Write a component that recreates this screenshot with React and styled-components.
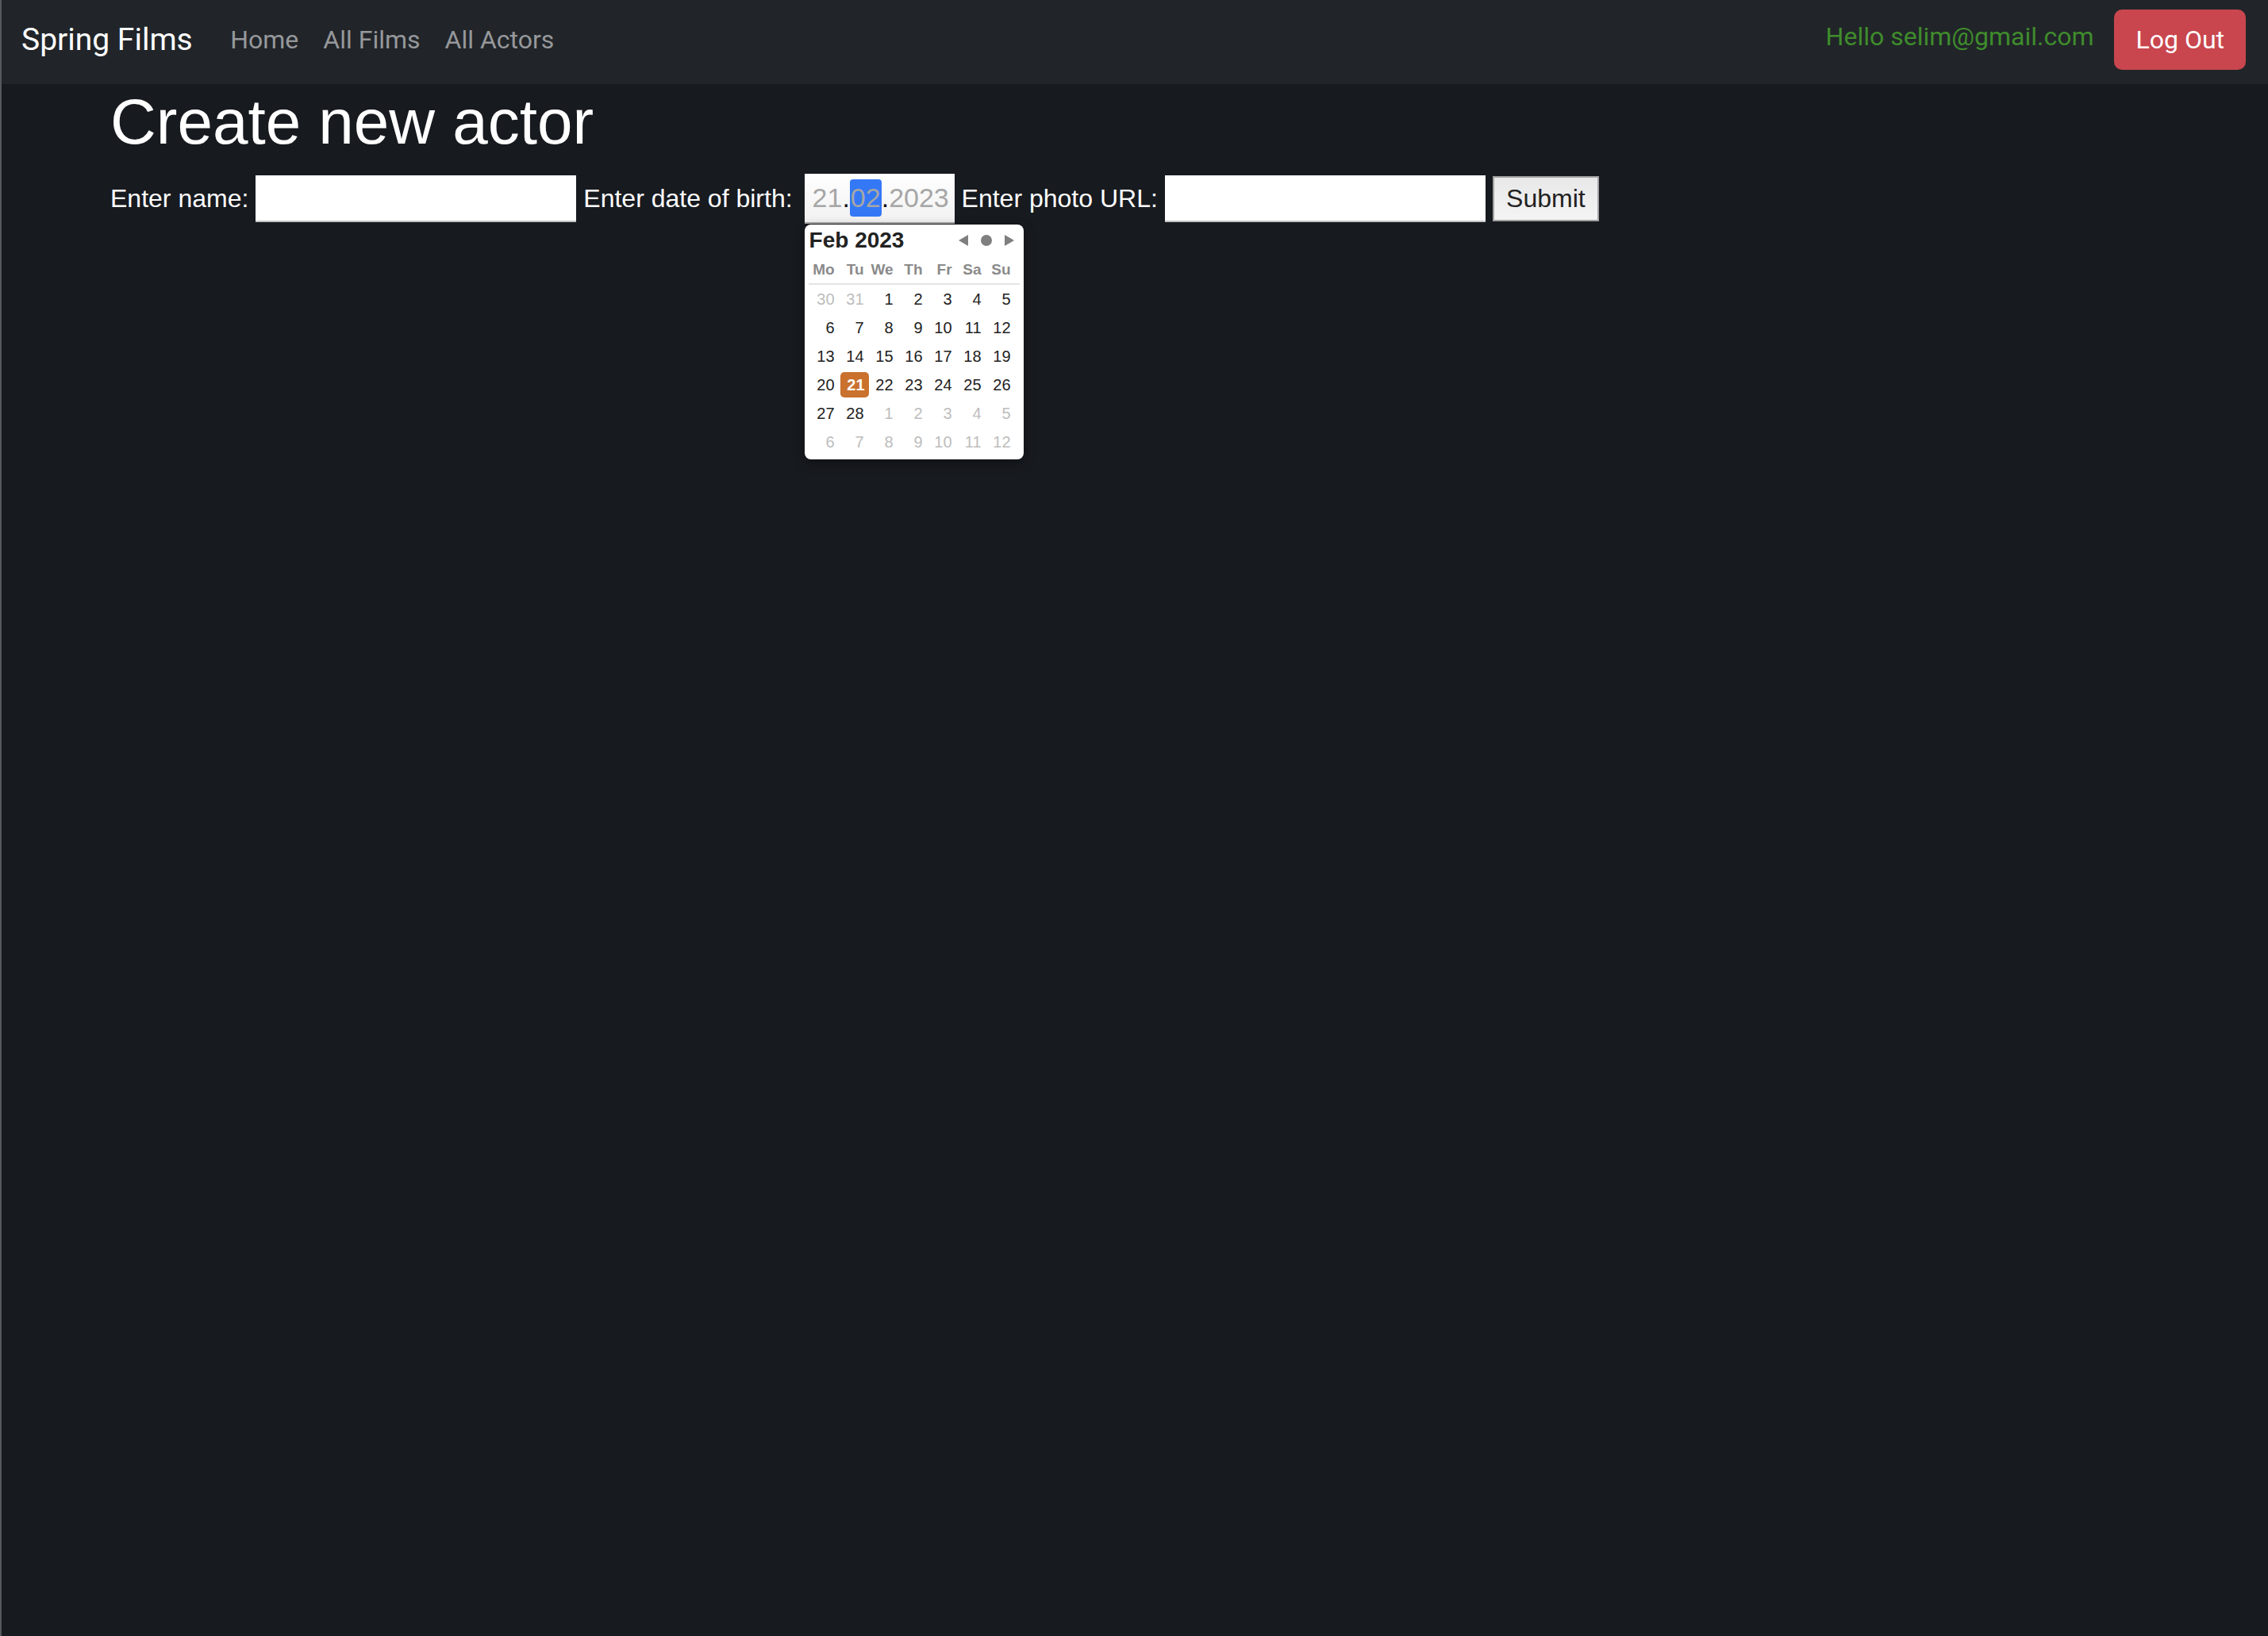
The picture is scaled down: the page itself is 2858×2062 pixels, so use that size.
import React from 'react'
import styled, { createGlobalStyle } from 'styled-components'

const GlobalStyle = createGlobalStyle`
  html, body {
    margin: 0;
    padding: 0;
    background: #171a1f;
  }
  * {
    box-sizing: border-box;
  }
`

const Page = styled.div`
  min-height: 100vh;
  background: #171a1f;
  border-left: 2px solid #55585d;
  font-family: "Liberation Sans", Arial, sans-serif;
`

const Navbar = styled.nav`
  height: 106px;
  background: #212529;
  display: flex;
  align-items: center;
  padding: 0 28px 6px 25px;
  font-family: Roboto, "Noto Sans", sans-serif;
`

const Brand = styled.a`
  font-size: 39px;
  color: #fff;
  margin-right: 32px;
  text-decoration: none;
`

const NavList = styled.div`
  display: flex;
`

const NavLink = styled.a`
  font-size: 32px;
  color: #96989b;
  padding: 0 15.5px;
  text-decoration: none;
`

const UserArea = styled.div`
  margin-left: auto;
  display: flex;
  align-items: center;
  gap: 26px;
`

const Hello = styled.span`
  font-size: 32px;
  color: #3f8c2c;
  margin-top: -8px;
`

const LogoutButton = styled.button`
  height: 76px;
  padding: 0 27px;
  border: none;
  border-radius: 10px;
  background: #c9464e;
  color: #fff;
  font-family: Roboto, "Noto Sans", sans-serif;
  font-size: 32px;
`

const Main = styled.main`
  padding-left: 137px;
`

const Title = styled.h1`
  margin: 0 0 17px;
  font-size: 80px;
  line-height: 96px;
  font-weight: 400;
  color: #fff;
`

const Form = styled.form`
  display: flex;
  align-items: center;
  gap: 9px;
`

const Label = styled.label`
  font-size: 32px;
  color: #fff;
`

const TextInput = styled.input`
  width: 404px;
  height: 59px;
  border: none;
  border-bottom: 2px solid #c4c4c4;
  background: #fff;
  font-size: 32px;
  padding: 0 6px;
  outline: none;
`

const DateField = styled.div`
  position: relative;
  margin-left: 6px;
`

const DateBox = styled.div`
  width: 189px;
  height: 63px;
  display: flex;
  align-items: center;
  padding-left: 10px;
  background: linear-gradient(#ffffff, #f1f1f1);
  border-bottom: 2px solid #a9a9a9;
  font-size: 34px;
  color: #a6a6a6;
`

const Dot = styled.span`
  color: #111;
`

const Segment = styled.span`
  display: flex;
  align-items: center;
  height: 47px;
  padding: 0 1px;
  border-radius: 4px;
  background: ${({ $active }) => ($active ? '#3478f6' : 'transparent')};
`

const Popup = styled.div`
  position: absolute;
  top: calc(100% + 1px);
  left: 0;
  width: 276px;
  padding: 0 5px 4px;
  background: #fff;
  border-radius: 8px;
  box-shadow: 0 4px 14px rgba(0, 0, 0, 0.35);
  z-index: 10;
`

const CalHeader = styled.div`
  height: 40px;
  display: flex;
  align-items: center;
  padding: 0 7px 0 1px;
`

const Month = styled.span`
  font-size: 28px;
  font-weight: 700;
  color: #222;
`

const Arrows = styled.div`
  margin-left: auto;
  display: flex;
  align-items: center;
  gap: 16px;
`

const Grid = styled.div`
  display: grid;
  grid-template-columns: repeat(7, 37px);
  grid-auto-rows: ${({ $row }) => $row}px;
  align-items: center;
`

const WeekRow = styled(Grid)`
  border-bottom: 2px solid #e4e4e4;
  padding-bottom: 1px;
`

const WeekDay = styled.span`
  text-align: right;
  padding-right: 4px;
  font-size: 19px;
  font-weight: 700;
  color: #8a8a8a;
`

const Cell = styled.div`
  display: flex;
  justify-content: flex-end;
  align-items: center;
  height: 36px;
  padding-right: 4px;
`

const Day = styled.span`
  font-size: 20px;
  color: ${({ $muted }) => ($muted ? '#bdbdbd' : '#222')};
  ${({ $selected }) =>
    $selected &&
    `
    width: 36px;
    height: 32px;
    margin-right: -6px;
    padding-right: 5px;
    display: flex;
    align-items: center;
    justify-content: flex-end;
    background: #c9712d;
    border-radius: 5px;
    color: #fff;
    font-weight: 700;
  `}
`

const SubmitButton = styled.button`
  width: 134px;
  height: 57px;
  border: 2px solid #a3a3a3;
  background: linear-gradient(#e8e8e8, #f4f4f4);
  color: #222;
  font-family: "Liberation Sans", Arial, sans-serif;
  font-size: 32px;
  padding: 0;
`

const weekDays = ['Mo', 'Tu', 'We', 'Th', 'Fr', 'Sa', 'Su']

const days = [
  [30, 1], [31, 1], [1], [2], [3], [4], [5],
  [6], [7], [8], [9], [10], [11], [12],
  [13], [14], [15], [16], [17], [18], [19],
  [20], [21, 0, 1], [22], [23], [24], [25], [26],
  [27], [28], [1, 1], [2, 1], [3, 1], [4, 1], [5, 1],
  [6, 1], [7, 1], [8, 1], [9, 1], [10, 1], [11, 1], [12, 1],
]

const ArrowLeft = () => (
  <svg width="12" height="14" viewBox="0 0 12 14">
    <path d="M0 7 L12 0 L12 14 Z" fill="#7f7f7f" />
  </svg>
)

const ArrowRight = () => (
  <svg width="12" height="14" viewBox="0 0 12 14">
    <path d="M12 7 L0 0 L0 14 Z" fill="#7f7f7f" />
  </svg>
)

const TodayDot = () => (
  <svg width="14" height="14" viewBox="0 0 14 14">
    <circle cx="7" cy="7" r="7" fill="#7f7f7f" />
  </svg>
)

const Calendar = () => (
  <Popup>
    <CalHeader>
      <Month>Feb 2023</Month>
      <Arrows>
        <ArrowLeft />
        <TodayDot />
        <ArrowRight />
      </Arrows>
    </CalHeader>
    <WeekRow $row={33}>
      {weekDays.map((d) => (
        <WeekDay key={d}>{d}</WeekDay>
      ))}
    </WeekRow>
    <Grid $row={36}>
      {days.map(([n, muted, selected], i) => (
        <Cell key={i}>
          <Day $muted={muted} $selected={selected}>{n}</Day>
        </Cell>
      ))}
    </Grid>
  </Popup>
)

const App = () => {
  return (
    <Page>
      <GlobalStyle />
      <Navbar>
        <Brand>Spring Films</Brand>
        <NavList>
          <NavLink>Home</NavLink>
          <NavLink>All Films</NavLink>
          <NavLink>All Actors</NavLink>
        </NavList>
        <UserArea>
          <Hello>Hello selim@gmail.com</Hello>
          <LogoutButton>Log Out</LogoutButton>
        </UserArea>
      </Navbar>
      <Main>
        <Title>Create new actor</Title>
        <Form onSubmit={(e) => e.preventDefault()}>
          <Label>Enter name:</Label>
          <TextInput type="text" />
          <Label>Enter date of birth:</Label>
          <DateField>
            <DateBox>
              <span>21</span>
              <Dot>.</Dot>
              <Segment $active>02</Segment>
              <Dot>.</Dot>
              <span>2023</span>
            </DateBox>
            <Calendar />
          </DateField>
          <Label>Enter photo URL:</Label>
          <TextInput type="text" />
          <SubmitButton type="submit">Submit</SubmitButton>
        </Form>
      </Main>
    </Page>
  )
}

export default App
